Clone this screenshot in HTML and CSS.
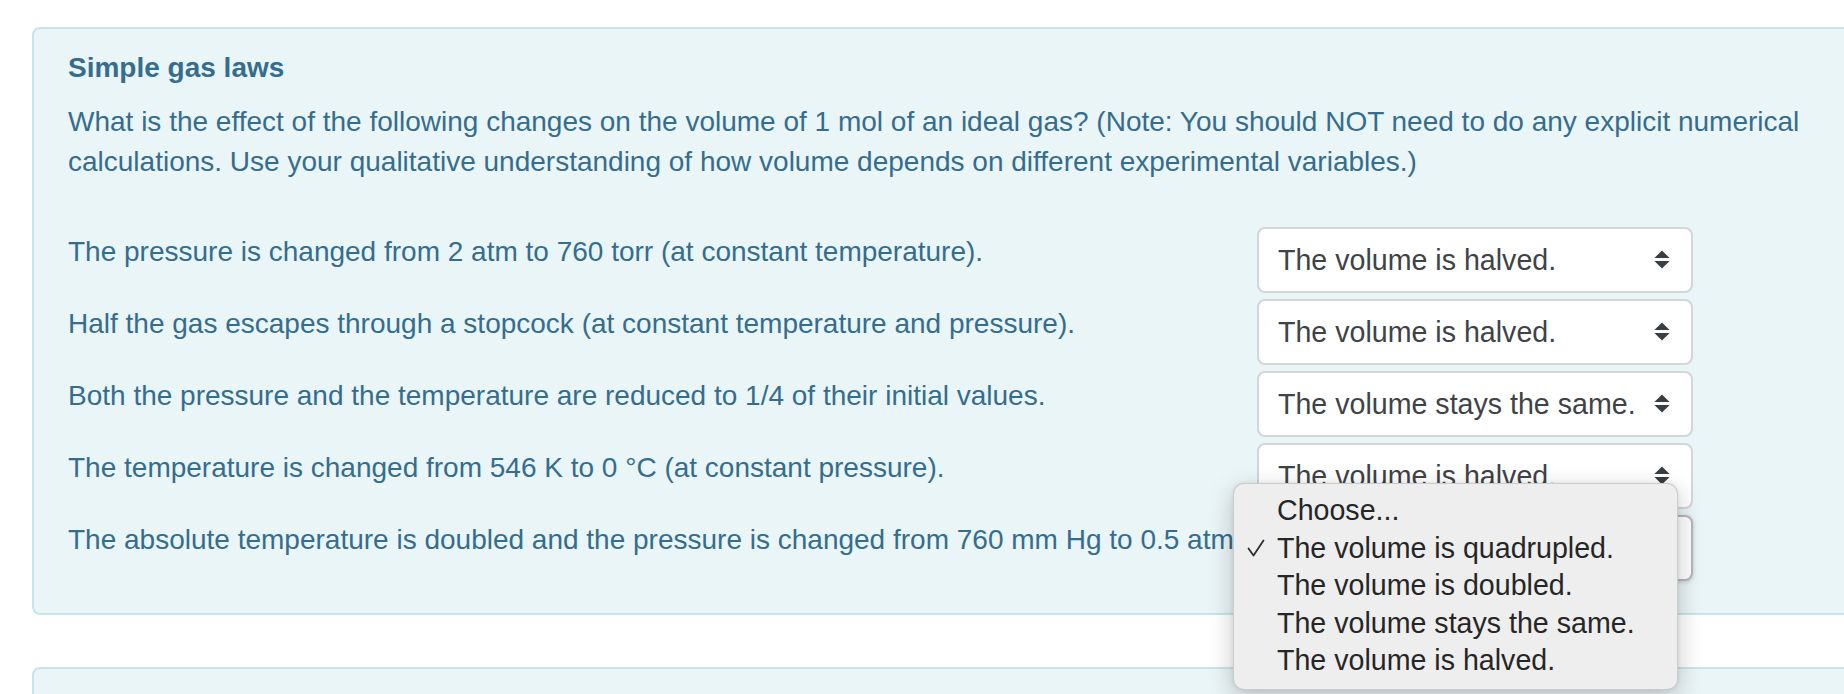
FILE: index.html
```html
<!DOCTYPE html>
<html lang="en">
<head>
<meta charset="utf-8">
<title>Simple gas laws</title>
<link rel="stylesheet" href="styles.css">
</head>
<body>
<div class="page">
  <section class="card">
    <h4 class="title">Simple gas laws</h4>
    <p class="intro">What is the effect of the following changes on the volume of 1 mol of an ideal gas? (Note: You should NOT need to do any explicit numerical calculations. Use your qualitative understanding of how volume depends on different experimental variables.)</p>
    <div class="rows">
      <label class="q">The pressure is changed from 2 atm to 760 torr (at constant temperature).</label>
      <div class="sel">
        <select class="control"><option>Choose...</option><option>The volume is quadrupled.</option><option>The volume is doubled.</option><option>The volume stays the same.</option><option selected>The volume is halved.</option></select>
        <svg class="arrows" viewBox="0 0 16 19" width="16" height="19"><path d="M8 0.5 L15.6 8 L0.4 8 Z"/><path d="M0.4 11 L15.6 11 L8 18.5 Z"/></svg>
      </div>

      <label class="q">Half the gas escapes through a stopcock (at constant temperature and pressure).</label>
      <div class="sel">
        <select class="control"><option>Choose...</option><option>The volume is quadrupled.</option><option>The volume is doubled.</option><option>The volume stays the same.</option><option selected>The volume is halved.</option></select>
        <svg class="arrows" viewBox="0 0 16 19" width="16" height="19"><path d="M8 0.5 L15.6 8 L0.4 8 Z"/><path d="M0.4 11 L15.6 11 L8 18.5 Z"/></svg>
      </div>

      <label class="q">Both the pressure and the temperature are reduced to 1/4 of their initial values.</label>
      <div class="sel">
        <select class="control"><option>Choose...</option><option>The volume is quadrupled.</option><option>The volume is doubled.</option><option selected>The volume stays the same.</option><option>The volume is halved.</option></select>
        <svg class="arrows" viewBox="0 0 16 19" width="16" height="19"><path d="M8 0.5 L15.6 8 L0.4 8 Z"/><path d="M0.4 11 L15.6 11 L8 18.5 Z"/></svg>
      </div>

      <label class="q">The temperature is changed from 546 K to 0 °C (at constant pressure).</label>
      <div class="sel">
        <select class="control"><option>Choose...</option><option>The volume is quadrupled.</option><option>The volume is doubled.</option><option>The volume stays the same.</option><option selected>The volume is halved.</option></select>
        <svg class="arrows" viewBox="0 0 16 19" width="16" height="19"><path d="M8 0.5 L15.6 8 L0.4 8 Z"/><path d="M0.4 11 L15.6 11 L8 18.5 Z"/></svg>
      </div>

      <label class="q">The absolute temperature is doubled and the pressure is changed from 760 mm Hg to 0.5 atm</label>
      <div class="sel">
        <select class="control control-active"><option>Choose...</option><option selected>The volume is quadrupled.</option><option>The volume is doubled.</option><option>The volume stays the same.</option><option>The volume is halved.</option></select>
        <svg class="arrows" viewBox="0 0 16 19" width="16" height="19"><path d="M8 0.5 L15.6 8 L0.4 8 Z"/><path d="M0.4 11 L15.6 11 L8 18.5 Z"/></svg>
      </div>
    </div>
  </section>

  <section class="card card-next"></section>

  <ul class="menu">
    <li class="item">Choose...</li>
    <li class="item checked"><svg class="check" viewBox="0 0 18 18" width="18" height="18"><polyline points="1.5,9.5 6.5,16.5 16.5,1.5"/></svg>The volume is quadrupled.</li>
    <li class="item">The volume is doubled.</li>
    <li class="item">The volume stays the same.</li>
    <li class="item">The volume is halved.</li>
  </ul>
</div>
</body>
</html>
```

FILE: styles.css
```css
html, body {
  margin: 0;
  padding: 0;
  background: #ffffff;
}

.page {
  position: relative;
  height: 694px;
  overflow: hidden;
  font-family: "Liberation Sans", Arial, Helvetica, sans-serif;
  font-size: 28px;
  line-height: 40px;
  color: #356d8e;
}

.card {
  margin: 27px -60px 52px 32px;
  padding: 19px 34px 32px 34px;
  background: #eaf5f8;
  border: 2px solid #c6e4ed;
  border-radius: 8px;
}

.card-next {
  margin-top: 0;
  height: 200px;
}

.title {
  margin: 0 0 14px 0;
  font-size: 28px;
  line-height: 40px;
  font-weight: bold;
}

.intro {
  margin: 0 0 45px 0;
}

.rows {
  display: grid;
  grid-template-columns: 1189px 436px;
  row-gap: 6px;
}

.q {
  padding-top: 5px;
  white-space: nowrap;
}

.sel {
  position: relative;
  height: 66px;
}

.control {
  appearance: none;
  -webkit-appearance: none;
  box-sizing: border-box;
  width: 436px;
  height: 66px;
  margin: 0;
  padding: 0 40px 0 19px;
  background: #ffffff;
  border: 2px solid #d0d6da;
  border-radius: 8px;
  font-family: "Liberation Sans", Arial, Helvetica, sans-serif;
  font-size: 28.6px;
  color: #3e4347;
}

.control-active {
  border-color: #b3b8bc;
  box-shadow: 0 1px 4px rgba(0, 0, 0, 0.18);
}

.arrows {
  position: absolute;
  right: 23px;
  top: 23px;
  fill: #3a3e42;
  pointer-events: none;
}

.menu {
  position: absolute;
  left: 1233px;
  top: 483px;
  box-sizing: border-box;
  width: 445px;
  height: 207px;
  margin: 0;
  padding: 8px 0 0 0;
  list-style: none;
  background: #eeeeee;
  border: 1px solid rgba(0, 0, 0, 0.14);
  border-radius: 11px;
  box-shadow: 0 8px 26px rgba(0, 0, 0, 0.22), 0 0 4px rgba(0, 0, 0, 0.08);
  font-size: 28.6px;
  line-height: 37.6px;
  color: #262626;
}

.item {
  position: relative;
  padding-left: 43px;
  white-space: nowrap;
}

.check {
  position: absolute;
  left: 13px;
  top: 9px;
  fill: none;
  stroke: #2e2e2e;
  stroke-width: 1.8;
  stroke-linecap: round;
  stroke-linejoin: round;
}
```
